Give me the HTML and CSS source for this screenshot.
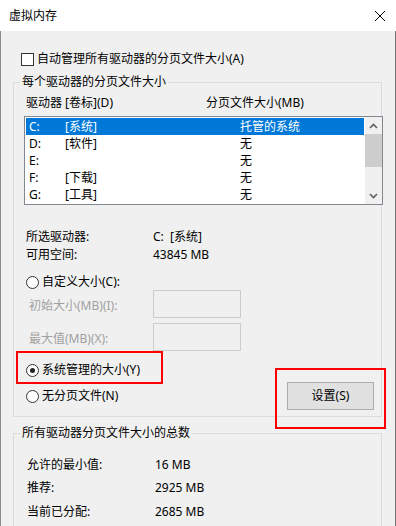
FILE: index.html
```html
<!DOCTYPE html>
<html lang="zh-CN">
<head>
    <meta charset="UTF-8">
    <meta name="viewport" content="width=device-width, initial-scale=1.0">
    <link rel="stylesheet" href="styles.css">
    <title>虚拟内存</title>
</head>
<body>
    <div class="window">
        <div class="titlebar">
            <span class="title">虚拟内存</span>
            <svg class="close" width="12" height="12" viewBox="0 0 12 12">
                <path d="M1 1 L11 11 M11 1 L1 11" stroke="#000" stroke-width="1" fill="none"/>
            </svg>
        </div>

        <div class="content">
            <div class="check-row">
                <span class="checkbox"></span>
                <span>自动管理所有驱动器的分页文件大小(A)</span>
            </div>

            <fieldset class="group group-drives">
                <legend>每个驱动器的分页文件大小</legend>
                <div class="list-head">
                    <span class="head-drive">驱动器 [卷标](D)</span>
                    <span>分页文件大小(MB)</span>
                </div>

                <div class="listbox">
                    <div class="rows">
                        <div class="row selected"><span>C:</span><span>[系统]</span><span>托管的系统</span></div>
                        <div class="row"><span>D:</span><span>[软件]</span><span>无</span></div>
                        <div class="row"><span>E:</span><span></span><span>无</span></div>
                        <div class="row"><span>F:</span><span>[下载]</span><span>无</span></div>
                        <div class="row"><span>G:</span><span>[工具]</span><span>无</span></div>
                    </div>
                    <div class="scrollbar">
                        <div class="arrow">
                            <svg width="9" height="6" viewBox="0 0 9 6"><path d="M1 5 L4.5 1.5 L8 5" stroke="#606060" stroke-width="1.6" fill="none"/></svg>
                        </div>
                        <div class="thumb"></div>
                        <div class="track"></div>
                        <div class="arrow">
                            <svg width="9" height="6" viewBox="0 0 9 6"><path d="M1 1 L4.5 4.5 L8 1" stroke="#606060" stroke-width="1.6" fill="none"/></svg>
                        </div>
                    </div>
                </div>

                <div class="info">
                    <span>所选驱动器:</span><span>C:&nbsp;&nbsp;[系统]</span>
                    <span>可用空间:</span><span>43845 MB</span>
                </div>

                <div class="radio-row custom">
                    <span class="radio"></span>
                    <span>自定义大小(C):</span>
                </div>
                <div class="size-row">
                    <span class="size-label">初始大小(MB)(I):</span>
                    <span class="field"></span>
                </div>
                <div class="size-row second">
                    <span class="size-label">最大值(MB)(X):</span>
                    <span class="field"></span>
                </div>

                <div class="bottom-row">
                    <div class="radios">
                        <div class="radio-row system">
                            <span class="radio checked"></span>
                            <span>系统管理的大小(Y)</span>
                            <span class="mark mark-radio"></span>
                        </div>
                        <div class="radio-row nopage">
                            <span class="radio"></span>
                            <span>无分页文件(N)</span>
                        </div>
                    </div>
                    <div class="btn-wrap">
                        <button class="btn">设置(S)</button>
                        <span class="mark mark-btn"></span>
                    </div>
                </div>
            </fieldset>

            <fieldset class="group group-total">
                <legend>所有驱动器分页文件大小的总数</legend>
                <div class="totals">
                    <span>允许的最小值:</span><span>16 MB</span>
                    <span class="t2">推荐:</span><span class="t2">2925 MB</span>
                    <span class="t3">当前已分配:</span><span class="t3">2685 MB</span>
                </div>
            </fieldset>
        </div>
    </div>
</body>
</html>
```

FILE: styles.css
```css
body {
    margin: 0;
    font-family: "Noto Sans", "Noto Sans CJK SC", sans-serif;
    font-size: 12px;
    line-height: 16px;
    color: #000;
    overflow: hidden;
}

.window {
    width: 396px;
    height: 526px;
    display: flex;
    flex-direction: column;
    overflow: hidden;
}

.titlebar {
    height: 31px;
    flex: none;
    display: flex;
    align-items: center;
    justify-content: space-between;
    background: #fff;
    padding: 0 10px 0 9px;
}

.title {
    line-height: 31px;
}

.close {
    display: block;
    margin-top: 1px;
}

.content {
    flex: 1;
    background: #f0f0f0;
    border-left: 1px solid #8c8c8c;
    border-right: 1px solid #707070;
}

.check-row {
    display: flex;
    align-items: center;
    height: 16px;
    margin: 20px 0 0 20px;
}

.checkbox {
    width: 11px;
    height: 11px;
    border: 1px solid #333;
    background: #fff;
    margin-right: 3px;
}

/* group boxes */
.group {
    margin: 7px 0 0 12px;
    width: 369px;
    box-sizing: border-box;
    padding: 0;
    border: 1px solid #dcdcdc;
    min-width: 0;
}

.group legend {
    margin-left: 6px;
    padding: 0 2px;
    line-height: 16px;
}

.group-drives {
    padding-bottom: 6px;
}

.group-total {
    margin-top: 8px;
    height: 140px;
}

.list-head {
    display: flex;
    margin-top: 5px;
    padding-left: 12px;
}

.head-drive {
    width: 180px;
}

/* list box */
.listbox {
    display: flex;
    width: 359px;
    height: 89px;
    box-sizing: border-box;
    margin: 5px 0 0 10px;
    border: 1px solid #828790;
    background: #fff;
}

.rows {
    width: 340px;
    padding: 1px;
    box-sizing: border-box;
}

.row {
    display: grid;
    grid-template-columns: 36px 175px 1fr;
    height: 17px;
    line-height: 17px;
    padding-left: 3px;
}

.row.selected {
    background: #0078d7;
    color: #fff;
}

.scrollbar {
    width: 17px;
    display: flex;
    flex-direction: column;
    background: #f0f0f0;
}

.arrow {
    height: 17px;
    display: flex;
    align-items: center;
    justify-content: center;
}

.thumb {
    height: 33px;
    background: #cdcdcd;
}

.track {
    flex: 1;
}

/* selected drive info */
.info,
.totals {
    display: grid;
    grid-template-columns: 127px 1fr;
    grid-auto-rows: 18px;
    align-items: center;
    margin: 23px 0 0 12px;
}

.radio-row {
    display: flex;
    align-items: center;
    height: 16px;
    margin-left: 12px;
    position: relative;
}

.radio-row.custom {
    margin-top: 10px;
}

.radio {
    width: 11px;
    height: 11px;
    border: 1px solid #333;
    border-radius: 50%;
    background: #fff;
    margin-right: 3px;
    display: flex;
    align-items: center;
    justify-content: center;
}

.radio.checked::after {
    content: "";
    width: 5px;
    height: 5px;
    border-radius: 50%;
    background: #222;
}

.size-row {
    display: flex;
    align-items: center;
    margin-left: 15px;
    color: #a0a0a0;
}

.size-row.second {
    margin-top: 5px;
}

.size-label {
    width: 124px;
    padding-top: 3px;
}

.field {
    width: 88px;
    height: 28px;
    box-sizing: border-box;
    border: 1px solid #cccccc;
}

.bottom-row {
    display: flex;
    justify-content: space-between;
}

.radio-row.system {
    margin-top: 11px;
}

.radio-row.nopage {
    margin-top: 10px;
}

.btn-wrap {
    position: relative;
    margin: 31px 7px 0 0;
}

.btn {
    display: block;
    width: 87px;
    height: 28px;
    font: inherit;
    color: #000;
    background: #e1e1e1;
    border: 1px solid #adadad;
    padding: 0;
}

/* red highlight frames */
.mark {
    position: absolute;
    border: 2px solid #ff0000;
    box-sizing: border-box;
    pointer-events: none;
}

.mark-radio {
    left: -10px;
    top: -11px;
    width: 147px;
    height: 33px;
}

.mark-btn {
    left: -12px;
    top: -14px;
    width: 111px;
    height: 61px;
}

.totals {
    margin: 16px 0 0 13px;
    grid-template-columns: 128px 1fr;
    grid-auto-rows: auto;
    row-gap: 7px;
}

.totals .t3 {
    margin-top: 1px;
}
```
